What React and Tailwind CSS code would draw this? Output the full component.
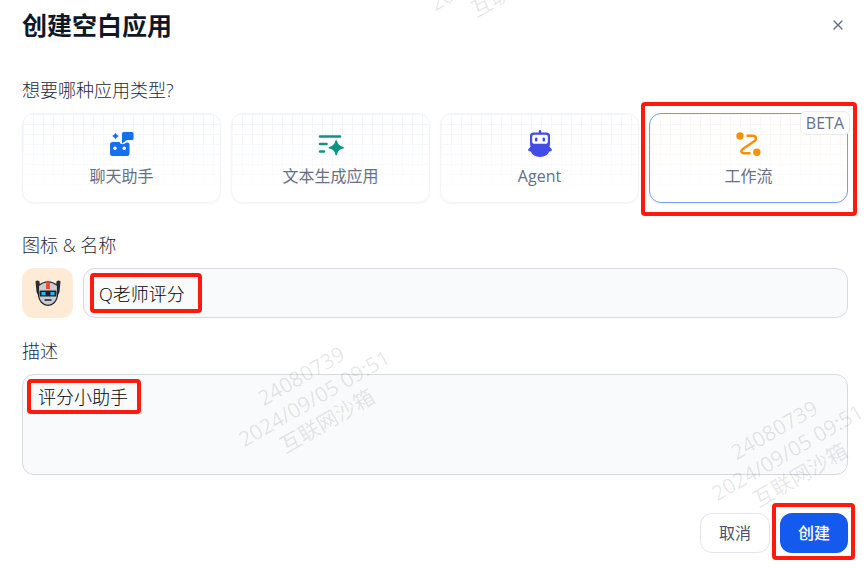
import React, { useState } from 'react';
import { X } from 'lucide-react';
import clsx from 'clsx';

const ChatIcon = () => (
  <svg width="26" height="26" viewBox="0 0 26 26" fill="#1570ef">
    <path d="M6.5 2.2Q7.2 4.3 9.3 5Q7.2 5.7 6.5 7.8Q5.8 5.7 3.7 5Q5.8 4.3 6.5 2.2Z" stroke="#1570ef" strokeWidth="0.8" strokeLinejoin="round" />
    <path d="M14.5 1H23Q24.5 1 24.5 2.5V7.5Q24.5 9 23 9H18L13 12.5V2.5Q13 1 14.5 1Z" />
    <path d="M3.5 11H10.5Q11.5 13.3 13.5 13.3Q15.5 13 17.5 11.5H18.5Q20.5 11.5 20.5 13.5V22.5Q20.5 25 18 25H3.5Q1 25 1 22.5V13.5Q1 11 3.5 11Z" />
    <circle cx="6" cy="17.3" r="1.7" fill="#fff" />
    <circle cx="15.3" cy="17.3" r="1.7" fill="#fff" />
  </svg>
);

const TextIcon = () => (
  <svg width="26" height="26" viewBox="0 0 26 26" fill="none" stroke="#0e9384" strokeWidth="2.6" strokeLinecap="round">
    <path d="M2 5.5H22M2 13H8.5M2 20.5H6" />
    <path
      d="M18.2 10Q19.2 15.5 25 16.8Q19.2 18 18.2 23.5Q17.2 18 11.5 16.8Q17.2 15.5 18.2 10Z"
      fill="#0e9384"
      strokeWidth="1.6"
      strokeLinejoin="round"
    />
  </svg>
);

const AgentIcon = () => (
  <svg width="26" height="28" viewBox="0 0 26 28" fill="#444ce7">
    <rect x="11.8" y="0" width="2.4" height="4" rx="1.2" />
    <path fillRule="evenodd" d="M6.5 2.5H19.5Q23 2.5 23 6V15.5H3V6Q3 2.5 6.5 2.5ZM7 4.7Q5.200 4.7 5.2 6.5V12Q5.2 13.8 7 13.8H19Q20.8 13.8 20.8 12V6.5Q20.8 4.7 19 4.7Z" />
    <rect x="8" y="7.5" width="2.4" height="4" rx="1" />
    <rect x="15.6" y="7.5" width="2.4" height="4" rx="1" />
    <path d="M4 14.5H22Q22.3 17.5 25 19.8Q24.5 21.8 22.5 21.3Q20 27 13 27Q6 27 3.5 21.3Q1.5 21.8 1 19.8Q3.7 17.5 4 14.5Z" />
  </svg>
);

const WorkflowIcon = () => (
  <svg width="26" height="26" viewBox="0 0 26 26" fill="none" stroke="#f79009" strokeWidth="2.4" strokeLinecap="round">
    <circle cx="4" cy="5" r="3.7" fill="#f79009" stroke="none" />
    <circle cx="20.8" cy="21.3" r="3.7" fill="#f79009" stroke="none" />
    <path d="M11.5 4.8H17C20.3 4.8 20.8 8 18.5 10L6.5 18.2C4.3 20 5 22.2 8 22.2H13.5" />
  </svg>
);

const RobotFace = () => (
  <svg width="26" height="26" viewBox="0 0 26 26">
    <path d="M0.5 1.5Q2.5 -0.5 4.5 1.5L5 6H21L21.5 1.5Q23.5 -0.5 25.5 1.5L24.5 12L22 17H4L1.5 12Z" fill="#2b2b30" />
    <path d="M3.5 5.5Q13 -2 22.5 5.5V16Q20.5 25 13 25.3Q5.5 25 3.5 16Z" fill="#c9ccd1" stroke="#26262b" strokeWidth="1.2" />
    <path d="M11 1.8H15V9H11Z" fill="#f04a35" />
    <path d="M5.5 10.5H20.5Q21.5 10.5 21.5 12V15.5Q21.5 16.5 20.5 16.5H5.5Q4.5 16.5 4.5 15.5V12Q4.5 10.5 5.5 10.5Z" fill="#1f2126" />
    <path d="M6.5 12H10.5V15.2H6.5ZM15.5 12H19.5V15.2H15.5Z" fill="#22b8ee" />
    <path d="M9.5 20H16.5" stroke="#26262b" strokeWidth="1.6" />
  </svg>
);

const appTypes = [
  { id: 'chat', name: '聊天助手', icon: ChatIcon, grid: 'bg-[linear-gradient(to_bottom,transparent_10%,#fff_95%),linear-gradient(#f1f6fe_1px,transparent_1px),linear-gradient(90deg,#f1f6fe_1px,transparent_1px)]' },
  { id: 'text', name: '文本生成应用', icon: TextIcon, grid: 'bg-[linear-gradient(to_bottom,transparent_10%,#fff_95%),linear-gradient(#f1f6fe_1px,transparent_1px),linear-gradient(90deg,#f1f6fe_1px,transparent_1px)]' },
  { id: 'agent', name: 'Agent', icon: AgentIcon, grid: 'bg-[linear-gradient(to_bottom,transparent_10%,#fff_95%),linear-gradient(#f4f5fe_1px,transparent_1px),linear-gradient(90deg,#f4f5fe_1px,transparent_1px)]' },
  { id: 'workflow', name: '工作流', icon: WorkflowIcon, beta: true, grid: 'bg-[linear-gradient(to_bottom,transparent_10%,#fff_95%),linear-gradient(#fcf6f1_1px,transparent_1px),linear-gradient(90deg,#fcf6f1_1px,transparent_1px)]' }
];

// red frame laid over the part of the form to look at
const Highlight = ({ className }) => (
  <div className={clsx('absolute border-4 border-[#ff1a0d] rounded-sm pointer-events-none', className)} />
);

const Watermark = ({ className }) => (
  <div className={clsx('absolute w-[180px] -translate-x-1/2 -translate-y-1/2 -rotate-30 text-center text-[21px] leading-[26px] font-normal whitespace-nowrap text-black/10', className)}>
    <p>24080739</p>
    <p>2024/09/05 09:51</p>
    <p>互联网沙箱</p>
  </div>
);

const App = () => {
  const [type, setType] = useState('workflow');
  const [name, setName] = useState('Q老师评分');
  const [description, setDescription] = useState('评分小助手');

  return (
    <div className="relative overflow-hidden bg-white pt-2 pb-4 pl-[22px] pr-[17px] font-['Open_Sans','Noto_Sans_CJK_SC',sans-serif] font-light text-[#1d2939]">
      <header className="flex items-center justify-between">
        <h1 className="text-[25px] leading-[34px] font-bold text-[#101828]">创建空白应用</h1>
        <button aria-label="关闭" className="p-0.5 text-[#667085]">
          <X size={16} />
        </button>
      </header>

      <h2 className="mt-[34px] text-lg leading-7">想要哪种应用类型?</h2>
      <div className="mt-[9px] grid grid-cols-4 gap-[10px]">
        {appTypes.map(item => (
          <div key={item.id} className="relative">
            <button
              onClick={() => setType(item.id)}
              className={clsx(
                'flex h-[90px] w-full flex-col items-center justify-center gap-1 rounded-xl border pt-1 text-base leading-7 font-normal text-[#667085] shadow-xs bg-size-[100%_100%,10px_10px,10px_10px]',
                item.grid,
                type === item.id ? 'border-[#709dfa]' : 'border-[#f2f4f7]'
              )}
            >
              <span className="flex h-7 items-center"><item.icon /></span>
              {item.name}
            </button>
            {item.beta && (
              <span className="absolute -top-0.5 -right-0.5 rounded-md border border-[#eaecf0] bg-white px-[5px] text-base leading-[22px] font-normal text-[#667085]">
                BETA
              </span>
            )}
            {item.beta && <Highlight className="-top-[11px] -bottom-[13px] -left-2 -right-[9px]" />}
          </div>
        ))}
      </div>

      <label htmlFor="name" className="mt-7 block text-lg leading-7">图标 &amp; 名称</label>
      <div className="mt-[9px] flex gap-[10px]">
        <button aria-label="图标" className="flex h-[50px] w-[51px] items-center justify-center rounded-xl bg-[#ffead5]">
          <RobotFace />
        </button>
        <div className="relative flex-1">
          <input
            id="name"
            value={name}
            onChange={(e) => setName(e.target.value)}
            className="h-[50px] w-full rounded-xl border border-[#d5d9e2] bg-[#f9fafb] px-[15px] text-lg text-black outline-none"
          />
          <Highlight className="top-[5px] left-[7px] h-10 w-28" />
        </div>
      </div>

      <label htmlFor="description" className="mt-[19px] block text-lg leading-7">描述</label>
      <div className="relative mt-[9px]">
        <textarea
          id="description"
          value={description}
          onChange={(e) => setDescription(e.target.value)}
          className="block h-[101px] w-full resize-none rounded-xl border border-[#d5d9e2] bg-[#f9fafb] px-[15px] py-2 text-lg leading-7 text-black outline-none"
        />
        <Highlight className="top-[5px] left-[5px] h-[35px] w-[114px]" />
      </div>

      <div className="mt-[38px] flex justify-end gap-[10px]">
        <button className="h-10 w-[70px] rounded-xl border border-[#e1e4e9] bg-white text-base font-normal text-[#475467]">取消</button>
        <div className="relative">
          <button className="h-10 w-[68px] rounded-xl bg-[#155aef] text-base font-medium text-white">创建</button>
          <Highlight className="-top-[10px] -bottom-[7px] -left-2 -right-[7px]" />
        </div>
      </div>

      <div aria-hidden="true" className="pointer-events-none absolute inset-0 overflow-hidden">
        <Watermark className="top-[398px] left-[314px]" />
        <Watermark className="top-[452px] left-[787px]" />
        <Watermark className="-top-[38px] left-[505px]" />
      </div>
    </div>
  );
};

export default App;
